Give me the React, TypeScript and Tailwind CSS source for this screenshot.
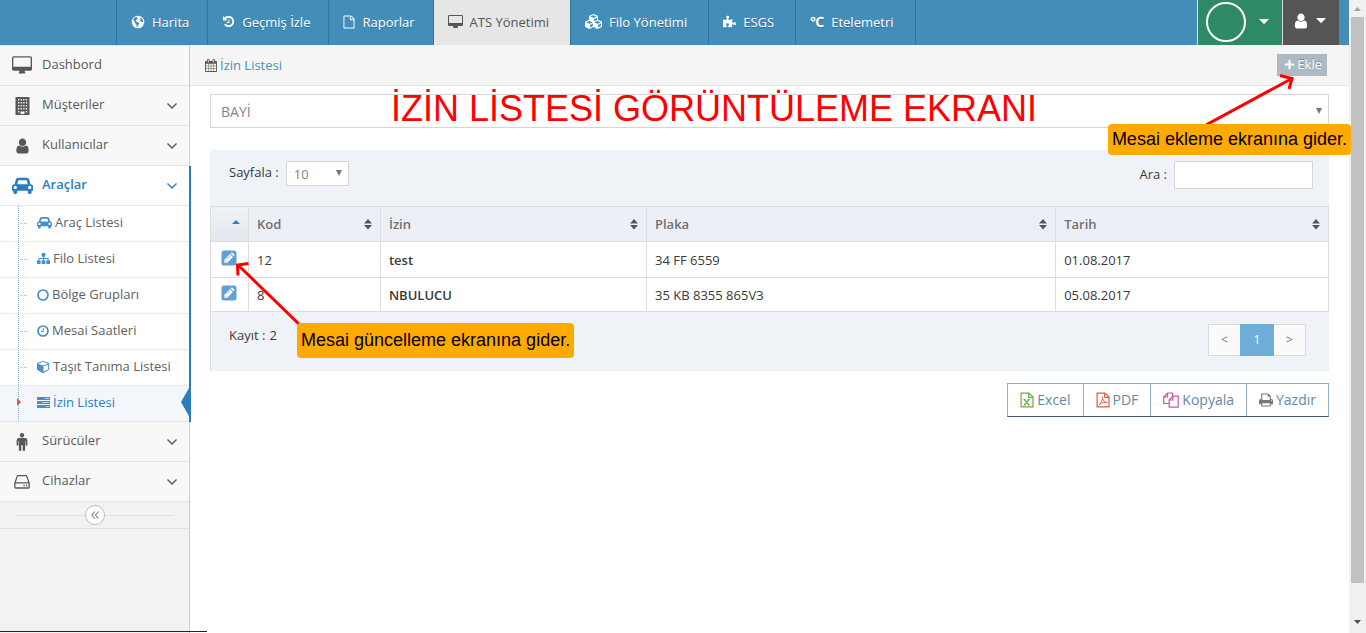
import type { ReactNode } from "react";
import { FaCubes, FaPlus, FaPuzzlePiece } from "react-icons/fa";

type IconProps = { className?: string };

function Glyph({ d, box = "0 0 1792 1792", className = "" }: { d: string; box?: string; className?: string }) {
  return (
    <svg viewBox={box} className={`shrink-0 ${className}`} fill="currentColor" aria-hidden="true">
      <path d={d} />
    </svg>
  );
}

const HISTORY =
  "M1664 896q0 156-61 298t-164 245-245 164-298 61q-172 0-327-72.5t-264-204.5q-7-10-6.5-22.5t8.5-20.5l137-138q10-9 25-9 16 2 23 12 73 95 179 147t225 52q104 0 198.5-40.5t163.5-109.5 109.5-163.5 40.5-198.5-40.5-198.5-109.5-163.5-163.5-109.5-198.5-40.5q-98 0-188 35.5t-160 101.5l137 138q31 30 14 69-17 40-59 40h-448q-26 0-45-19t-19-45v-448q0-42 40-59 39-17 69 14l130 129q107-101 244.5-156.5t284.5-55.5q156 0 298 61t245 164 164 245 61 298zm-640-288v448q0 14-9 23t-23 9h-320q-14 0-23-9t-9-23v-64q0-14 9-23t23-9h224v-352q0-14 9-23t23-9h64q14 0 23 9t9 23z";
const FILE =
  "M1596 380q28 28 48 76t20 88v1152q0 40-28 68t-68 28h-1344q-40 0-68-28t-28-68v-1600q0-40 28-68t68-28h896q40 0 88 20t76 48zm-444-244v376h376q-10-29-22-41l-313-313q-12-12-41-22zm384 1528v-1024h-416q-40 0-68-28t-28-68v-416h-768v1536h1280z";
const DESKTOP =
  "M1728 992v-832q0-13-9.5-22.5t-22.5-9.5h-1600q-13 0-22.5 9.5t-9.5 22.5v832q0 13 9.5 22.5t22.5 9.5h1600q13 0 22.5-9.5t9.5-22.5zm128-832v1088q0 66-47 113t-113 47h-544q0 37 16 77.5t32 71 16 43.5q0 26-19 45t-45 19h-512q-26 0-45-19t-19-45q0-14 16-44t32-70 16-78h-544q-66 0-113-47t-47-113v-1088q0-66 47-113t113-47h1600q66 0 113 47t47 113z";
const USER =
  "M1536 1399q0 109-62.5 187t-150.5 78h-854q-88 0-150.5-78t-62.5-187q0-85 8.5-160.5t31.5-152 58.5-131 94-89 134.5-34.5q131 128 313 128t313-128q76 0 134.5 34.5t94 89 58.5 131 31.5 152 8.5 160.5zm-256-887q0 159-112.5 271.5t-271.5 112.5-271.5-112.5-112.5-271.5 112.5-271.5 271.5-112.5 271.5 112.5 112.5 271.5z";
const CALENDAR =
  "M192 1664h288v-288h-288v288zm352 0h320v-288h-320v288zm-352-352h288v-320h-288v320zm352 0h320v-320h-320v320zm-352-384h288v-288h-288v288zm736 736h320v-288h-320v288zm-384-736h320v-288h-320v288zm768 736h288v-288h-288v288zm-384-352h320v-320h-320v320zm-352-864v-288q0-13-9.5-22.5t-22.5-9.5h-64q-13 0-22.5 9.5t-9.5 22.5v288q0 13 9.5 22.5t22.5 9.5h64q13 0 22.5-9.5t9.5-22.5zm736 864h288v-320h-288v320zm-384-384h320v-288h-320v288zm384 0h288v-288h-288v288zm32-480v-288q0-13-9.5-22.5t-22.5-9.5h-64q-13 0-22.5 9.5t-9.5 22.5v288q0 13 9.5 22.5t22.5 9.5h64q13 0 22.5-9.5t9.5-22.5zm384-64v1280q0 52-38 90t-90 38h-1408q-52 0-90-38t-38-90v-1280q0-52 38-90t90-38h128v-96q0-66 47-113t113-47h64q66 0 113 47t47 113v96h384v-96q0-66 47-113t113-47h64q66 0 113 47t47 113v96h128q52 0 90 38t38 90z";
const CAR =
  "M480 1088q0-66-47-113t-113-47-113 47-47 113 47 113 113 47 113-47 47-113zm36-320h1016l-89-357q-2-8-14-17.5t-21-9.5h-768q-9 0-21 9.5t-14 17.5zm1372 320q0-66-47-113t-113-47-113 47-47 113 47 113 113 47 113-47 47-113zm160-96v384q0 14-9 23t-23 9h-96v128q0 80-56 136t-136 56-136-56-56-136v-128h-1024v128q0 80-56 136t-136 56-136-56-56-136v-128h-96q-14 0-23-9t-9-23v-384q0-93 65.5-158.5t158.5-65.5h28l105-419q23-94 104-157.5t179-63.5h768q98 0 179 63.5t104 157.5l105 419h28q93 0 158.5 65.5t65.5 158.5z";
const SITEMAP =
  "M1792 1248v320q0 40-28 68t-68 28h-320q-40 0-68-28t-28-68v-320q0-40 28-68t68-28h96v-192h-512v192h96q40 0 68 28t28 68v320q0 40-28 68t-68 28h-320q-40 0-68-28t-28-68v-320q0-40 28-68t68-28h96v-192h-512v192h96q40 0 68 28t28 68v320q0 40-28 68t-68 28h-320q-40 0-68-28t-28-68v-320q0-40 28-68t68-28h96v-192q0-52 38-90t90-38h512v-192h-96q-40 0-68-28t-28-68v-320q0-40 28-68t68-28h320q40 0 68 28t28 68v320q0 40-28 68t-68 28h-96v192h512q52 0 90 38t38 90v192h96q40 0 68 28t28 68z";
const CUBE =
  "M896 1629l640-349v-636l-640 233v752zm-64-865l698-254-698-254-698 254zm832-252v768q0 35-18 65t-49 47l-704 384q-28 16-61 16t-61-16l-704-384q-31-17-49-47t-18-65v-768q0-40 23-73t61-47l704-256q22-8 44-8t44 8l704 256q38 14 61 47t23 73z";
const PRINT =
  "M448 1536h896v-256h-896v256zm0-640h896v-384h-160q-40 0-68-28t-28-68v-160h-640v640zm1152 64q0-26-19-45t-45-19-45 19-19 45 19 45 45 19 45-19 19-45zm128 0v416q0 13-9.5 22.5t-22.5 9.5h-224v160q0 40-28 68t-68 28h-960q-40 0-68-28t-28-68v-160h-224q-13 0-22.5-9.5t-9.5-22.5v-416q0-79 56.5-135.5t135.5-56.5h64v-544q0-40 28-68t68-28h672q40 0 88 20t76 48l152 152q28 28 48 76t20 88v256h64q79 0 135.5 56.5t56.5 135.5z";
const MALE =
  "M6 0a2.200 2.200 0 1 1 0 4.400a2.200 2.200 0 0 1 0-4.400zM3 5h6q2.400 0 2.400 2.400v4.300q0 1-0.900 1t-0.900-1V8h-0.500v9q0 1-1.200 1t-1.200-1v-4.800h-1.400V17q0 1-1.200 1T2.900 17V8h-0.500v3.700q0 1-0.900 1t-0.900-1V7.400Q0.600 5 3 5z";

function Building() {
  return (
    <svg viewBox="0 0 15 18" className="h-[18px] w-[15px]" aria-hidden="true">
      <path fill="currentColor" d="M0.500 0h14v18H0.500z" />
      <g fill="#f8f8f8">
        {[2, 5, 8, 11].map((y) => [3, 5.6, 8.2, 10.8].map((x) => <rect key={`${x}-${y}`} x={x} y={y} width="1.3" height="1.5" />))}
        <path d="M3 14h1.300v1.500H3zM10.800 14h1.300v1.500h-1.300zM5.500 14.500h4V17h-4z" />
      </g>
    </svg>
  );
}

function Globe() {
  return (
    <svg viewBox="0 0 14 14" className="size-[14px] shrink-0" aria-hidden="true">
      <circle cx="7" cy="7" r="6.300" fill="currentColor" />
      <path fill="#438eb9" d="M2.600 3.300L4.200 2.200L6 2.300L7 3.200L6.200 4.300L5.200 4.900L4.700 6L5.600 6.800L7 7.200L8.300 8.300L7.700 9.600L6.800 10.700L6.400 12.300L5.600 11.500L5.400 9.500L4.300 8.300L3.500 6.600L2.500 5.200zM9 2.600L10.700 3.200L11.900 5L12.200 6.600L11.300 7.300L10.300 6.500L9.200 6.300L8.700 5.200L9.700 4.200z" />
    </svg>
  );
}

function Chevron({ className = "" }: IconProps) {
  return (
    <svg viewBox="0 0 10 6" className={`h-[6px] w-[10px] shrink-0 ${className}`} fill="none" stroke="currentColor" strokeWidth="1.400" aria-hidden="true">
      <path d="M0.500 0.500L5 5L9.500 0.500" />
    </svg>
  );
}

function Caret({ className = "" }: IconProps) {
  return <Glyph d="M0 0h10L5.500 4.700Q5 5.200 4.500 4.700z" box="0 0 10 6" className={`h-[6px] w-[10px] ${className}`} />;
}

function Drive() {
  return (
    <svg viewBox="0 0 16 14" className="h-[14px] w-4" fill="none" stroke="currentColor" strokeWidth="1.300" aria-hidden="true">
      <path d="M0.800 8.300L3.200 1.400Q3.400 0.700 4.100 0.700h7.800q0.700 0 0.900 0.700L15.200 8.300v3.700q0 1-1 1H1.800q-1 0-1-1zM0.800 7.800h14.400" />
      <path d="M9.500 10.500h1.200M12 10.500h1.200" />
    </svg>
  );
}

function Tasks() {
  return (
    <svg viewBox="0 0 13 11" className="h-[11px] w-[13px] shrink-0" aria-hidden="true">
      <path fill="currentColor" d="M0 0h13v3H0zM0 4h13v3H0zM0 8h13v3H0z" />
      <path stroke="#bcd5ec" strokeWidth="1" d="M8 1.500h4M5 5.500h7M9 9.500h3" />
    </svg>
  );
}

function Clock() {
  return (
    <svg viewBox="0 0 12 12" className="size-3 shrink-0" fill="none" stroke="currentColor" aria-hidden="true">
      <circle cx="6" cy="6" r="5" strokeWidth="1.700" />
      <path d="M6.200 3v3.500H4" strokeWidth="1" />
    </svg>
  );
}

function Ring() {
  return (
    <svg viewBox="0 0 12 12" className="size-3 shrink-0" fill="none" stroke="currentColor" aria-hidden="true">
      <circle cx="6" cy="6" r="5" strokeWidth="1.700" />
    </svg>
  );
}

function PencilBox() {
  return (
    <svg viewBox="0 0 16 16" className="size-4" aria-hidden="true">
      <rect x="0.500" y="0.500" width="15" height="15" rx="2.500" fill="#629fd3" />
      <path fill="#fff" d="M3.300 9.800L9 4.100l2.900 2.900L6.200 12.700H3.300zM9.700 3.400l0.600-0.600q0.600-0.500 1.200 0l1.700 1.700q0.500 0.600 0 1.200l-0.600 0.600z" />
      <path stroke="#629fd3" strokeWidth="0.800" d="M5.500 9.300L9.300 5.500" />
      <path fill="#629fd3" d="M4.200 10.200l1.600 1.600h-1v-0.600h-0.600z" />
    </svg>
  );
}

function Sheet({ className, children }: { className: string; children: ReactNode }) {
  return (
    <svg viewBox="0 0 14 16" className={`h-4 w-[14px] shrink-0 ${className}`} fill="none" stroke="currentColor" strokeWidth="1.200" aria-hidden="true">
      <path d="M1.100 1.100h7.900l4 4v9.800H1.100zM8.700 1.100v4.300h4.300" />
      {children}
    </svg>
  );
}

function Copies() {
  return (
    <svg viewBox="0 0 16 16" className="size-4 shrink-0" fill="none" stroke="#c55a9d" strokeWidth="1.200" aria-hidden="true">
      <path d="M6.200 11.500H0.800V4.700L4.500 1h5v3M4.500 1v3.800H0.800" />
      <path d="M6.200 8l3.700-3.800h5.300v11H6.200zM9.900 4.200V8H6.200" />
    </svg>
  );
}

function Sort() {
  return <Glyph d="M4 0l4 4.500H0zM0 6h8L4 10.500z" box="0 0 8 11" className="h-[11px] w-2 text-[#555]" />;
}

const topItems: { label: string; icon: ReactNode; wide?: boolean; active?: boolean }[] = [
  { label: "Harita", icon: <Globe /> },
  { label: "Geçmiş İzle", icon: <Glyph d={HISTORY} className="size-[13px]" /> },
  { label: "Raporlar", icon: <Glyph d={FILE} box="64 0 1664 1792" className="h-[14px] w-3" /> },
  { label: "ATS Yönetimi", icon: <Glyph d={DESKTOP} box="-64 0 1920 1792" className="h-[14px] w-[15px]" />, wide: true, active: true },
  { label: "Filo Yönetimi", icon: <FaCubes className="size-[17px]" />, wide: true },
  { label: "ESGS", icon: <FaPuzzlePiece className="size-[13px]" />, wide: true },
  { label: "Etelemetri", icon: <span className="text-sm font-bold">℃</span>, wide: true },
];

const subItems: { label: string; icon: ReactNode; active?: boolean }[] = [
  { label: "Araç Listesi", icon: <Glyph d={CAR} box="0 0 2048 1792" className="h-[13px] w-[15px]" /> },
  { label: "Filo Listesi", icon: <Glyph d={SITEMAP} className="size-[13px]" /> },
  { label: "Bölge Grupları", icon: <Ring /> },
  { label: "Mesai Saatleri", icon: <Clock /> },
  { label: "Taşıt Tanıma Listesi", icon: <Glyph d={CUBE} className="size-[13px]" /> },
  { label: "İzin Listesi", icon: <Tasks />, active: true },
];

function SideItem({ icon, label, open, arrow = true }: { icon: ReactNode; label: string; open?: boolean; arrow?: boolean }) {
  return (
    <a
      href="#"
      className={`flex h-10 items-center border-b border-[#e5e5e5] pr-3 ${
        open ? "bg-white font-semibold text-[#2b7dbc]" : "bg-[#f8f8f8] text-[#585858]"
      }`}
    >
      <span className="flex w-[42px] items-center justify-center pl-[2px]">{icon}</span>
      <span className="flex-1 pb-[3px]">{label}</span>
      {arrow && <Chevron />}
    </a>
  );
}

const columns = ["Kod", "İzin", "Plaka", "Tarih"];
const rows = [
  { kod: "12", izin: "test", plaka: "34 FF 6559", tarih: "01.08.2017" },
  { kod: "8", izin: "NBULUCU", plaka: "35 KB 8355 865V3", tarih: "05.08.2017" },
];

const exportsList = [
  {
    label: "Excel",
    icon: (
      <Sheet className="text-[#69aa46]">
        <path d="M4.200 7.500L9.200 13M9 7.500L4.300 13M3.500 7.500h2M7.800 7.500h2M3.500 13h2M7.800 13h2" />
      </Sheet>
    ),
  },
  {
    label: "PDF",
    icon: (
      <Sheet className="text-[#dd5a43]">
        <path strokeWidth="0.900" d="M6.200 4.500q0.600 0 0.400 1.800Q5.900 10 3 13.200M6.600 6.500Q7.400 10 11 11.200M4 11.500Q7 10 11 10.300" />
      </Sheet>
    ),
  },
  { label: "Kopyala", icon: <Copies /> },
  { label: "Yazdır", icon: <Glyph d={PRINT} box="64 64 1664 1664" className="size-[14px] text-[#777]" /> },
];

function TopBar() {
  return (
    <header className="flex h-[45px] bg-[#438eb9] text-white">
      <nav className="ml-[116px] flex flex-1 border-l border-[#35759b]">
        {topItems.map((t) => (
          <a
            key={t.label}
            href="#"
            className={`flex items-center gap-[7px] whitespace-nowrap border-r border-[#35759b] pb-[2px] pl-[14px] ${
              t.wide ? "pr-[21px]" : "pr-[18px]"
            } ${t.active ? "bg-[#e6e6e6] text-[#555]" : "[text-shadow:0_1px_0_rgba(0,0,0,0.25)]"}`}
          >
            {t.icon}
            {t.label}
          </a>
        ))}
      </nav>
      <button type="button" aria-label="Firma" className="flex w-[85px] items-center gap-[13px] border-l border-[#ddd] bg-[#2e8965] pb-px pl-2">
        <span className="size-10 rounded-full border-2 border-white" />
        <Caret />
      </button>
      <button type="button" aria-label="Kullanıcı" className="mr-[10px] flex w-[57px] items-center gap-[7px] border-l border-[#ddd] bg-[#555] pb-[3px] pl-[10px]">
        <Glyph d={USER} box="128 64 1536 1664" className="h-4 w-4" />
        <Caret />
      </button>
    </header>
  );
}

function Sidebar() {
  return (
    <aside className="w-[190px] shrink-0 border-r border-t border-[#ccc] border-t-[#e5e5e5] bg-[#f2f2f2]">
      <SideItem icon={<Glyph d={DESKTOP} box="-64 0 1920 1792" className="h-[19px] w-[20px]" />} label="Dashbord" arrow={false} />
      <SideItem icon={<Building />} label="Müşteriler" />
      <SideItem icon={<Glyph d={USER} box="192 64 1408 1664" className="h-4 w-[15px]" />} label="Kullanıcılar" />
      <div className="relative z-10 -mr-[2px] border-r-2 border-[#2b7dbc]">
        <SideItem icon={<Glyph d={CAR} box="0 0 2048 1792" className="h-[19px] w-[21px]" />} label="Araçlar" open />
        <ul className="relative bg-white">
          {subItems.map((s, i) => (
            <li key={s.label} className={`relative ${i > 0 ? "border-t border-dotted border-[#ddd]" : ""}`}>
              <a
                href="#"
                className={`flex h-[35px] items-center gap-[3px] whitespace-nowrap pb-[2px] pl-[37px] ${
                  s.active ? "bg-[#f3f6fb] text-[#2b7dbc]" : "text-[#616161]"
                }`}
              >
                <span className="text-[#478fca]">{s.icon}</span>
                <span className="pb-[2px]">{s.label}</span>
              </a>
              {s.active ? (
                <>
                  <Glyph d="M0 0L4 4L0 8z" box="0 0 4 8" className="absolute left-[17px] top-3 z-10 h-2 w-1 text-[#c86139]" />
                  <Glyph d="M8 0v28L0 14z" box="0 0 8 28" className="absolute right-0 top-[2px] h-7 w-2 text-[#2b7dbc]" />
                </>
              ) : (
                <span className="absolute left-5 top-[17px] w-[7px] border-t border-dotted border-[#9dbdd6]" />
              )}
            </li>
          ))}
          <li aria-hidden="true" className="absolute bottom-0 left-[18px] top-0 border-l border-dotted border-[#7fb0d3]" />
        </ul>
        <div className="border-t border-[#e5e5e5]" />
      </div>
      <SideItem icon={<Glyph d={MALE} box="0 0 12 18" className="h-[18px] w-3" />} label="Sürücüler" />
      <SideItem icon={<Drive />} label="Cihazlar" />
      <div className="flex h-[27px] items-center border-b border-[#e0e0e0] px-[15px]">
        <span className="flex-1 border-t border-[#e0e0e0]" />
        <button type="button" aria-label="Menüyü daralt" className="flex size-5 items-center justify-center rounded-full border border-[#bbb] bg-white text-[#999]">
          <svg viewBox="0 0 8 8" className="size-2" fill="none" stroke="currentColor" strokeWidth="1.200" aria-hidden="true">
            <path d="M3.800 0.500L0.700 4l3.100 3.500M7.500 0.500L4.400 4l3.100 3.500" />
          </svg>
        </button>
        <span className="flex-1 border-t border-[#e0e0e0]" />
      </div>
    </aside>
  );
}

function ListTable() {
  return (
    <table className="w-full table-fixed border-collapse bg-white text-left">
      <colgroup>
        <col className="w-[3.4%]" />
        <col className="w-[11.8%]" />
        <col className="w-[23.8%]" />
        <col className="w-[36.6%]" />
        <col className="w-[24.4%]" />
      </colgroup>
      <thead>
        <tr className="h-[35px] bg-[#ecf0f6] text-[#707070]">
          <th aria-label="Düzenle" className="border border-[#ddd] bg-linear-to-b from-[#eff3f8] to-[#e3e7ed] pr-2">
            <Glyph d="M4 0l4 4H0z" box="0 0 8 4" className="-mt-1 ml-auto h-1 w-2 text-[#307ecc]" />
          </th>
          {columns.map((c) => (
            <th key={c} className="border border-[#ddd] px-2 font-semibold">
              <span className="flex items-center justify-between">
                {c}
                <Sort />
              </span>
            </th>
          ))}
        </tr>
      </thead>
      <tbody className="text-[#393939]">
        {rows.map((r) => (
          <tr key={r.kod} className="h-[34px] first:h-9">
            <td className="border border-[#ddd] pr-px">
              <button type="button" aria-label={`${r.izin} düzenle`} className="mx-auto block pb-1">
                <PencilBox />
              </button>
            </td>
            <td className="border border-[#ddd] px-2">{r.kod}</td>
            <td className="border border-[#ddd] px-2 font-semibold">{r.izin}</td>
            <td className="border border-[#ddd] px-2">{r.plaka}</td>
            <td className="border border-[#ddd] px-2">{r.tarih}</td>
          </tr>
        ))}
      </tbody>
    </table>
  );
}

function Content() {
  return (
    <main className="min-w-0 flex-1 bg-white">
      <div className="flex h-[41px] items-center justify-between border-b border-[#e5e5e5] bg-[#f5f5f5] pl-[15px] pr-[22px]">
        <a href="#" className="flex items-center gap-[3px] text-[#4c8fbd]">
          <Glyph d={CALENDAR} box="64 0 1664 1792" className="h-[13px] w-3 text-[#585858]" />
          İzin Listesi
        </a>
        <button type="button" className="flex h-[22px] items-center gap-[2px] bg-[#abbac3] pb-[2px] pl-[7px] pr-[5px] text-white [text-shadow:0_-1px_0_rgba(0,0,0,0.25)]">
          <FaPlus className="size-[11px]" />
          Ekle
        </button>
      </div>
      <div className="px-5 pt-2">
        <div className="relative">
          <select aria-label="Bayi" className="h-[34px] w-full appearance-none border border-[#d5d5d5] bg-white px-[10px] pt-px text-sm text-[#858585]">
            <option>BAYİ</option>
          </select>
          <Glyph d="M0 0h6L3 6z" box="0 0 6 6" className="pointer-events-none absolute right-[7px] top-[14px] size-[6px] text-[#777]" />
        </div>
        <section className="mt-[22px] bg-[#eff3f8] text-[#393939]">
          <div className="flex h-14 items-start justify-between pl-[19px] pr-4 pt-[11px]">
            <label className="flex items-center gap-[7px]">
              <span className="pb-[3px]">Sayfala :</span>
              <span className="relative">
                <select className="block h-[25px] w-[63px] appearance-none border border-[#d5d5d5] bg-white px-[7px] text-[#858585]">
                  <option>10</option>
                </select>
                <Glyph d="M0 0h6L3 6z" box="0 0 6 6" className="pointer-events-none absolute right-[7px] top-[9px] size-[6px] text-[#777]" />
              </span>
            </label>
            <label className="flex items-center gap-[7px]">
              <span className="pb-[3px]">Ara :</span>
              <input type="text" className="h-7 w-[139px] border border-[#d5d5d5] bg-white px-2" />
            </label>
          </div>
          <ListTable />
          <div className="flex h-[59px] items-start justify-between border-l border-[#ddd] pl-[18px] pr-[23px] pt-3">
            <span className="flex gap-1 pt-px">
              <span>Kayıt :</span>
              <span>2</span>
            </span>
            <nav aria-label="Sayfalar" className="flex h-8 text-xs text-[#777]">
              <button type="button" className="w-8 border border-r-0 border-[#d9d9d9] bg-[#fafafa]">&lt;</button>
              <button type="button" className="w-[34px] bg-[#6faed9] text-white">1</button>
              <button type="button" className="w-8 border border-l-0 border-[#d9d9d9] bg-[#fafafa]">&gt;</button>
            </nav>
          </div>
        </section>
        <div className="mt-3 flex justify-end">
          <div className="flex h-[34px] divide-x divide-[#8fafc8] border border-[#8fafc8] border-b-[#44536a] text-sm text-[#6688a6]">
            {exportsList.map((e) => (
              <button key={e.label} type="button" className="flex items-center gap-[3px] px-3">
                {e.icon}
                {e.label}
              </button>
            ))}
          </div>
        </div>
      </div>
    </main>
  );
}

function ScrollTrack() {
  return (
    <div aria-hidden="true" className="flex w-[17px] shrink-0 flex-col items-center bg-[#f1f1f1]">
      <span className="flex h-[17px] items-center">
        <Glyph d="M3.500 0L7 4H0z" box="0 0 7 4" className="h-1 w-[7px] text-[#a3a3a3]" />
      </span>
      <span className="w-[13px] flex-1 bg-[#c1c1c1]" />
      <span className="flex h-[50px] items-end pb-[9px]">
        <Glyph d="M0 0h7L3.500 4z" box="0 0 7 4" className="h-1 w-[7px] text-[#505050]" />
      </span>
    </div>
  );
}

const callout = "absolute z-20 rounded-[4px] bg-[#ffaa00] whitespace-nowrap text-black font-['Liberation_Sans',Arial,sans-serif] text-lg";

export default function App() {
  return (
    <div className="relative flex min-h-screen overflow-hidden bg-white font-['Open_Sans','Noto_Sans',sans-serif] text-[13px] leading-5">
      <div className="flex min-w-0 flex-1 flex-col">
        <TopBar />
        <div className="flex flex-1">
          <Sidebar />
          <Content />
        </div>
      </div>
      <ScrollTrack />

      <h1 className="absolute left-[391px] top-[89px] z-20 whitespace-nowrap font-['Liberation_Sans',Arial,sans-serif] text-4xl text-[#ff0000]">
        İZİN LİSTESİ GÖRÜNTÜLEME EKRANI
      </h1>
      <svg viewBox="0 0 90 52" className="pointer-events-none absolute right-[70px] top-[74px] z-10 h-[52px] w-[90px]" fill="none" stroke="#ff0000" strokeWidth="3" aria-hidden="true">
        <path d="M0 51L85 5M74 1.500L86 4.500L83 15" />
      </svg>
      <p className={`${callout} right-[15px] top-[124px] px-1 leading-[31px]`}>Mesai ekleme ekranına gider.</p>
      <svg viewBox="0 0 66 64" className="pointer-events-none absolute left-[234px] top-[261px] z-10 h-16 w-[66px]" fill="none" stroke="#ff0000" strokeWidth="3" aria-hidden="true">
        <path d="M65 63L4 4M14.500 2.500L3.500 4L4 14.500" />
      </svg>
      <p className={`${callout} left-[297px] top-[323px] px-1 leading-[35px]`}>Mesai güncelleme ekranına gider.</p>
      <div aria-hidden="true" className="absolute bottom-px left-0 z-20 w-[207px] border-t border-[#222]" />
    </div>
  );
}
